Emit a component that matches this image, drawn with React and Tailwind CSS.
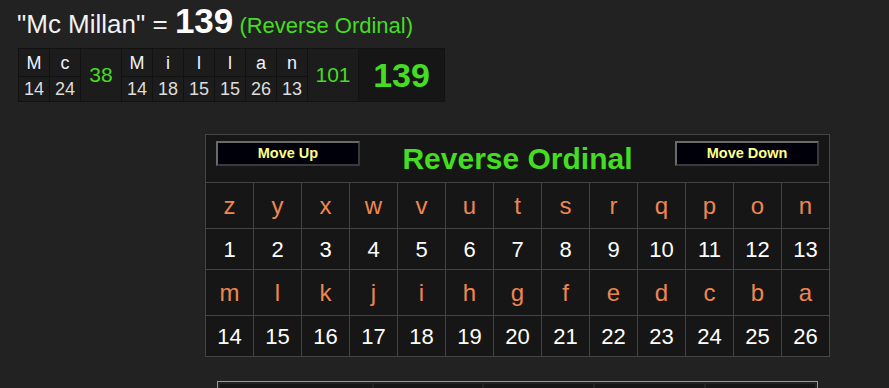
import React from "react";

const word = [
  { ch: "M", v: 14 },
  { ch: "c", v: 24 },
];
const word2 = [
  { ch: "M", v: 14 },
  { ch: "i", v: 18 },
  { ch: "l", v: 15 },
  { ch: "l", v: 15 },
  { ch: "a", v: 26 },
  { ch: "n", v: 13 },
];

const row1 = "zyxwvutsrqpon".split("");
const row2 = "mlkjihgfedcba".split("");

function LetterCol({ ch, v }) {
  return (
    <div className="flex flex-col gap-px">
      <div className="w-[30px] h-[27px] bg-[#1c1c1c] flex items-center justify-center text-[18px] leading-none text-[#eef3ff]">
        {ch}
      </div>
      <div className="w-[30px] h-[24px] bg-[#1c1c1c] flex items-center justify-center text-[18px] leading-none text-[#dddddd]">
        {v}
      </div>
    </div>
  );
}

function Btn({ children }) {
  return (
    <button className="mt-[6px] w-[144px] h-[25px] bg-[#00000a] border-2 border-t-[#6a6a6a] border-l-[#6a6a6a] border-b-[#3a3a3a] border-r-[#3a3a3a] text-[#ffff88] font-bold text-[14.5px] leading-none flex items-center justify-center">
      {children}
    </button>
  );
}

export default function App() {
  return (
    <div
      className="min-h-[388px] w-full bg-[#222222] text-white overflow-hidden"
      style={{ fontFamily: '"Liberation Sans", Arial, sans-serif' }}
    >
      <div className="pl-[17px] pt-[3px] h-[37px] flex items-baseline whitespace-pre leading-none">
        <span className="text-[26px] text-[#f2f2f2]">"Mc Millan" = </span>
        <span className="text-[35px] font-bold text-white">139</span>
        <span className="text-[22px] text-[#44dd22]"> (Reverse Ordinal)</span>
      </div>

      <div className="ml-[18px] mt-[11px] inline-flex align-top bg-[#121212] p-px gap-px">
        {word.map((c, i) => (
          <LetterCol key={i} {...c} />
        ))}
        <div className="w-[40px] bg-[#1c1c1c] flex items-center justify-center text-[21px] text-[#44dd22]">
          38
        </div>
        {word2.map((c, i) => (
          <LetterCol key={i} {...c} />
        ))}
        <div className="w-[50px] bg-[#1c1c1c] flex items-center justify-center text-[21px] text-[#44dd22]">
          101
        </div>
        <div className="w-[85px] bg-[#161616] flex items-center justify-center text-[34px] font-bold text-[#44dd22]">
          139
        </div>
      </div>

      <div className="pl-[146px] flex flex-col items-center mt-[32px]">
        <div className="w-[625px] border border-[#444444] bg-[#444444]">
          <div className="h-[47px] bg-[#161616] flex items-start justify-between px-[10px]">
            <Btn>Move Up</Btn>
            <span className="self-center text-[30px] font-bold text-[#44dd22] leading-none">Reverse Ordinal</span>
            <Btn>Move Down</Btn>
          </div>
          <div className="grid grid-cols-[repeat(13,47px)] gap-px mt-px">
            {row1.map((c) => (
              <div key={c} className="h-[45px] bg-[#161616] flex items-center justify-center text-[24px] text-[#ef8650]">
                {c}
              </div>
            ))}
            {row1.map((c, i) => (
              <div key={c + "n"} className="h-[40px] bg-[#161616] flex items-center justify-center text-[22px] text-white">
                {i + 1}
              </div>
            ))}
            {row2.map((c) => (
              <div key={c} className="h-[45px] bg-[#161616] flex items-center justify-center text-[24px] text-[#ef8650]">
                {c}
              </div>
            ))}
            {row2.map((c, i) => (
              <div key={c + "n"} className="h-[40px] bg-[#161616] flex items-center justify-center text-[22px] text-white">
                {i + 14}
              </div>
            ))}
          </div>
        </div>

        <div className="mt-[24px] w-[601px] border border-[#999999] p-[2px] flex gap-[2px]">
          <div className="w-[152px] h-[40px] bg-[#151515]" />
          <div className="w-[108px] h-[40px] bg-[#151515]" />
          <div className="w-[109px] h-[40px] bg-[#151515]" />
          <div className="w-[109px] h-[40px] bg-[#151515]" />
          <div className="flex-1 h-[40px] bg-[#151515]" />
        </div>
      </div>
    </div>
  );
}
